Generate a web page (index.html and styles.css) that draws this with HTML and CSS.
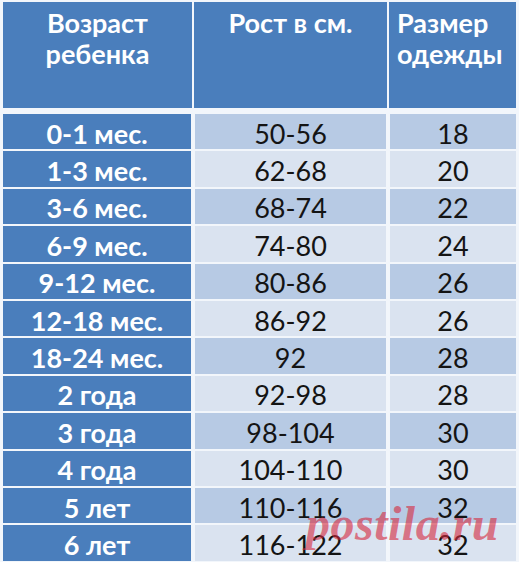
FILE: index.html
```html
<!DOCTYPE html>
<html lang="ru">
<head>
<meta charset="utf-8">
<title>Размеры одежды</title>
<link rel="stylesheet" href="styles.css">
</head>
<body>
<div class="sheet">
  <div class="head">
    <div class="hcell center">Возраст<br>ребенка</div>
    <div class="hcell center">Рост в см.</div>
    <div class="hcell left">Размер<br>одежды</div>
  </div>
  <div class="body">
    <div class="age">0-1 мес.</div><div class="val odd">50-56</div><div class="val odd">18</div>
    <div class="age">1-3 мес.</div><div class="val even">62-68</div><div class="val even">20</div>
    <div class="age">3-6 мес.</div><div class="val odd">68-74</div><div class="val odd">22</div>
    <div class="age">6-9 мес.</div><div class="val even">74-80</div><div class="val even">24</div>
    <div class="age">9-12 мес.</div><div class="val odd">80-86</div><div class="val odd">26</div>
    <div class="age">12-18 мес.</div><div class="val even">86-92</div><div class="val even">26</div>
    <div class="age">18-24 мес.</div><div class="val odd">92</div><div class="val odd">28</div>
    <div class="age">2 года</div><div class="val even">92-98</div><div class="val even">28</div>
    <div class="age">3 года</div><div class="val odd">98-104</div><div class="val odd">30</div>
    <div class="age">4 года</div><div class="val even">104-110</div><div class="val even">30</div>
    <div class="age">5 лет</div><div class="val odd">110-116</div><div class="val odd">32</div>
    <div class="age">6 лет</div><div class="val even">116-122</div><div class="val even">32</div>
  </div>
  <div class="watermark">postila.ru</div>
</div>
</body>
</html>
```
FILE: styles.css
```css
html, body {
  margin: 0;
  padding: 0;
  background: #f2f6fb;
}
body {
  font-family: Lato, "Open Sans", "Liberation Sans", sans-serif;
}
.sheet {
  position: relative;
  width: 519px;
  height: 562px;
  overflow: hidden;
  padding: 2px 3px 0 3px;
  box-sizing: border-box;
}
.head {
  display: grid;
  grid-template-columns: 189px 193px 127px;
  column-gap: 2px;
  height: 106px;
}
.hcell {
  background: #4a7ebc;
  color: #ffffff;
  font-weight: 700;
  font-size: 27px;
  line-height: 31px;
  padding-top: 5px;
}
.hcell.center { text-align: center; }
.hcell.left { text-align: left; padding-left: 8px; }
.body {
  display: grid;
  grid-template-columns: 188px 191px 126px;
  column-gap: 4px;
  row-gap: 2px;
  grid-auto-rows: 35.4px;
  margin-top: 6px;
}
.age, .val {
  display: flex;
  align-items: center;
  justify-content: center;
  font-size: 27px;
  padding-top: 3px;
  box-sizing: border-box;
}
.age {
  background: #4a7ebc;
  color: #ffffff;
  font-weight: 700;
}
.val {
  color: #141414;
  font-weight: 400;
}
.val.odd { background: #b7cae4; }
.val.even { background: #dae3f0; }
.watermark {
  position: absolute;
  left: 306px;
  top: 496px;
  font-family: "Liberation Serif", serif;
  font-style: italic;
  font-weight: 700;
  font-size: 48px;
  color: rgba(214, 40, 60, 0.6);
  letter-spacing: 0.5px;
}
```
